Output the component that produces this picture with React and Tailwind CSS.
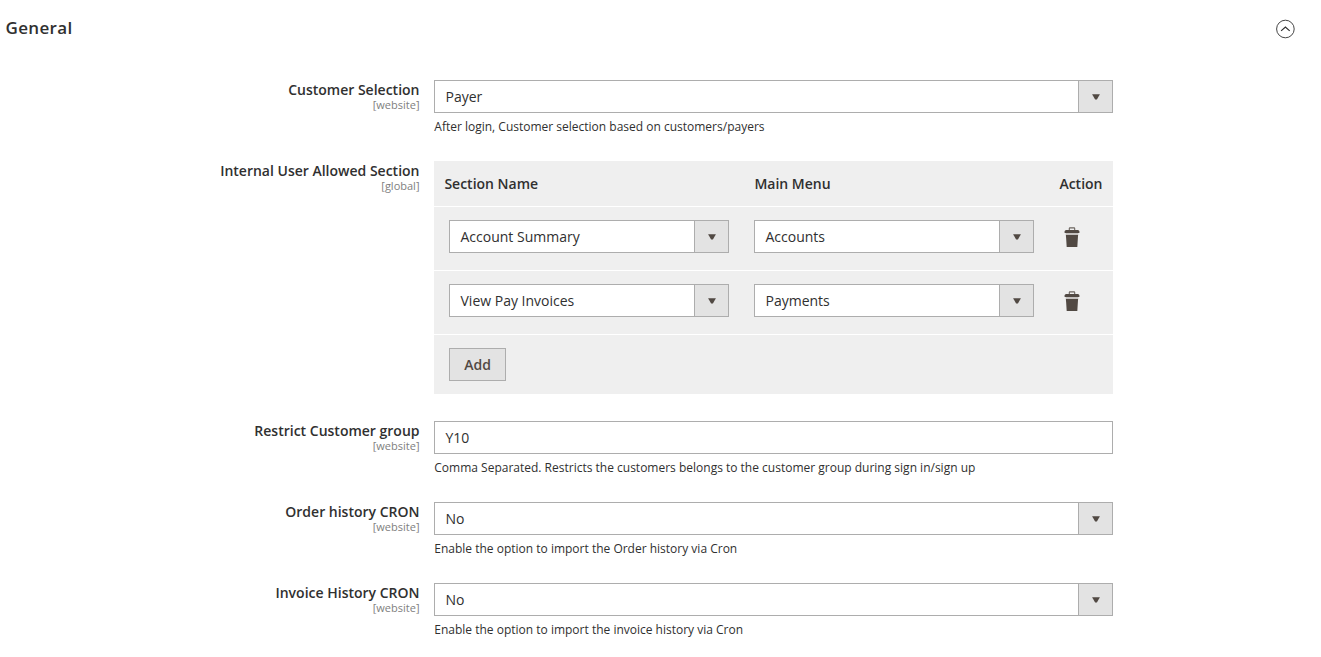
import React from "react";

function Caret() {
  return (
    <span className="flex w-[34px] shrink-0 items-center justify-center border-l border-[#adadad] bg-[#e3e3e3]">
      <svg width="8" height="7" viewBox="0 0 8 7" aria-hidden="true">
        <path d="M.1 1.2h7.8L4.9 6.4H3.1z" fill="#514943" />
      </svg>
    </span>
  );
}

function Select({ value, className = "" }) {
  return (
    <div className={`flex h-[33px] border border-[#adadad] bg-white ${className}`} role="combobox" aria-label={value} aria-expanded="false" aria-controls="none">
      <span className="flex-1 pl-[10.5px] text-sm leading-[32px]">{value}</span>
      <Caret />
    </div>
  );
}

function Field({ label, scope, note, children }) {
  return (
    <div className="flex items-start">
      <div className="w-[419.5px] shrink-0 text-right">
        <div className="text-sm leading-[19px] font-semibold">{label}</div>
        <div className="text-[11px] leading-[12px] text-[#808080]">[{scope}]</div>
      </div>
      <div className="ml-[14.5px] w-[679px]">
        {children}
        {note && <p className="mt-[5px] pl-[0.3px] text-xs leading-[17px]">{note}</p>}
      </div>
    </div>
  );
}

function Trash() {
  return (
    <svg width="16" height="20" viewBox="0 0 16 20" aria-hidden="true">
      <path d="M5.3 3.2V1.5Q5.3 .9 5.9 .9h4.2q.6 0 .6.6v1.7" fill="none" stroke="#6b645f" strokeWidth="1.1" />
      <path d="M.6 6V4.6Q.6 3 2.2 3h11.6q1.6 0 1.6 1.6V6z" fill="#514943" />
      <path d="M1.7 6h12.6v2H1.7z" fill="#c4c1bf" />
      <path d="M1.9 8h12.2l-.8 12H2.7z" fill="#514943" />
    </svg>
  );
}

const sections = [
  { name: "Account Summary", menu: "Accounts" },
  { name: "View Pay Invoices", menu: "Payments" },
];

export default function App() {
  return (
    <main className="h-[657px] w-[1321px] overflow-hidden bg-white font-['Open_Sans',sans-serif] text-[#303030]">
      <header className="flex h-[80px] items-start justify-between pr-[26px] pl-[5.5px]">
        <h2 className="pt-4 text-[17px] leading-6 font-semibold tracking-[0.35px]">General</h2>
        <svg className="mt-[19px]" width="20" height="20" viewBox="0 0 20 20" fill="none" stroke="#303030" aria-hidden="true">
          <circle cx="10.4" cy="10" r="8.8" strokeWidth="0.9" />
          <path d="M6.1 11.9 10.4 8.1l4.3 3.8" strokeWidth="1.2" />
        </svg>
      </header>
      <div className="flex flex-col">
        <div className="h-[81px]">
          <Field label="Customer Selection" scope="website" note="After login, Customer selection based on customers/payers">
            <Select value="Payer" />
          </Field>
        </div>
        <div className="h-[260px]">
          <Field label="Internal User Allowed Section" scope="global">
            <div className="bg-[#efefef]">
              <div className="flex h-[45px] text-sm leading-[45px] font-semibold">
                <span className="w-[310px] pl-[10.4px]">Section Name</span>
                <span className="w-[305px] pl-[10.4px]">Main Menu</span>
                <span className="pl-[10.4px]">Action</span>
              </div>
              {sections.map((s) => (
                <div key={s.name} className="flex h-16 items-start border-t border-white pt-[13px] pl-[15px]">
                  <Select value={s.name} className="w-[280px]" />
                  <Select value={s.menu} className="ml-[25px] w-[280px]" />
                  <button className="mt-[7px] ml-[30px]" aria-label="Delete">
                    <Trash />
                  </button>
                </div>
              ))}
              <div className="h-[60px] border-t border-white pt-[13px] pl-[15px]">
                <button className="block h-[33px] w-[57px] border border-[#adadad] bg-[#e3e3e3] text-sm leading-[31px] font-semibold text-[#514943]">Add</button>
              </div>
            </div>
          </Field>
        </div>
        <div className="h-[81px]">
          <Field label="Restrict Customer group" scope="website" note="Comma Separated. Restricts the customers belongs to the customer group during sign in/sign up">
            <div className="h-[33px] border border-[#adadad] pl-[10.5px] text-sm leading-[32px]">Y10</div>
          </Field>
        </div>
        <div className="h-[81px]">
          <Field label="Order history CRON" scope="website" note="Enable the option to import the Order history via Cron">
            <Select value="No" />
          </Field>
        </div>
        <Field label="Invoice History CRON" scope="website" note="Enable the option to import the invoice history via Cron">
          <Select value="No" />
        </Field>
      </div>
    </main>
  );
}
